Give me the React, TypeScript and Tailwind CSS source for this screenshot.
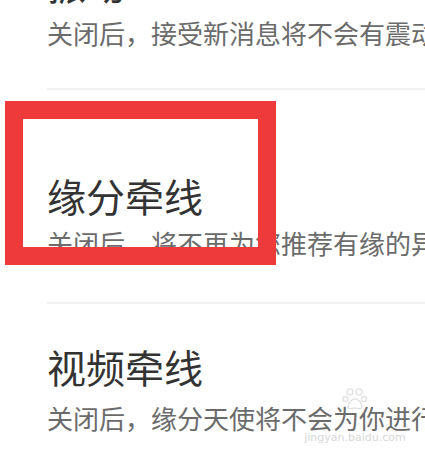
const items = [
  { title: '振动', desc: '关闭后，接受新消息将不会有震动提醒' },
  { title: '缘分牵线', desc: '关闭后，将不再为您推荐有缘的异性' },
  { title: '视频牵线', desc: '关闭后，缘分天使将不会为你进行视频牵线' },
]

export default function App() {
  return (
    <div
      className="relative h-[454px] w-[425px] overflow-hidden bg-white"
      style={{ fontFamily: '"Noto Sans CJK SC", "Noto Sans", sans-serif' }}
    >
      <div className="-mt-[36px] pl-[47px]">
        {/* 振动 */}
        <p className="whitespace-nowrap text-[39px] leading-[39px] text-[#333333]">{items[0].title}</p>
        <p className="mt-[17px] whitespace-nowrap text-[26px] leading-[26px] text-[#6b6b6b]">{items[0].desc}</p>
        <div className="mt-[42px] h-[2px] bg-[#f2f2f2]" />

        {/* 缘分牵线 */}
        <p className="mt-[86px] whitespace-nowrap text-[39px] leading-[39px] text-[#333333]">{items[1].title}</p>
        <p className="mt-[15px] whitespace-nowrap text-[26px] leading-[26px] text-[#6b6b6b]">{items[1].desc}</p>
        <div className="mt-[46px] h-[2px] bg-[#f2f2f2]" />

        {/* 视频牵线 */}
        <p className="mt-[43px] whitespace-nowrap text-[39px] leading-[39px] text-[#333333]">{items[2].title}</p>
        <p className="mt-[19px] whitespace-nowrap text-[26px] leading-[26px] text-[#6b6b6b]">{items[2].desc}</p>
      </div>

      {/* highlight frame drawn over the screenshot */}
      <div className="absolute left-[5px] top-[101px] h-[164px] w-[271px] border-[18px] border-[#ef3a3c]" />

      {/* watermark */}
      <div className="absolute left-[310px] top-[388px] flex w-[90px] flex-col items-center">
        <svg width="26" height="22" viewBox="0 0 26 22" fill="none" stroke="#e4e4e4" strokeWidth="1.5">
          <circle cx="8" cy="4" r="3" />
          <circle cx="17" cy="4" r="3" />
          <circle cx="3.5" cy="11" r="2.5" />
          <circle cx="22" cy="11" r="2.5" />
          <path d="M6 19c0-5 4-8 7-8s7 3 7 8c0 2-3 2-7 1-4 1-7 1-7-1z" />
        </svg>
        <span
          className="mt-[22px] text-[11px] leading-[11px] text-[#d8d8d8]"
          style={{ fontFamily: '"DejaVu Sans", sans-serif' }}
        >
          jingyan.baidu.com
        </span>
      </div>
    </div>
  )
}
